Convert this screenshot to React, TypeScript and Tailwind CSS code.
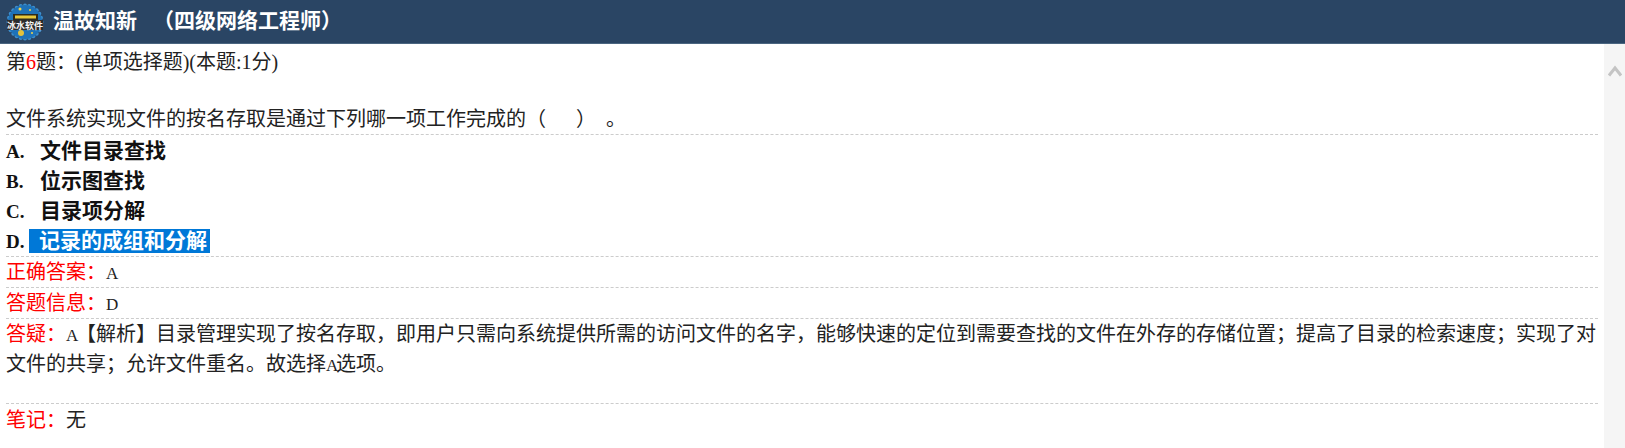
const options = [
  { key: 'A', text: '文件目录查找' },
  { key: 'B', text: '位示图查找' },
  { key: 'C', text: '目录项分解' },
];

function Half({ children }: { children: string }) {
  return <span className="inline-block w-[10px] text-[17px] leading-none">{children}</span>;
}

function Logo() {
  const dots = Array.from({ length: 24 }, (_, i) => (i * Math.PI * 2) / 24);
  return (
    <svg width="38" height="38" viewBox="0 0 38 38" className="shrink-0">
      {dots.map((a) => (
        <circle key={a} cx={19 + 16.5 * Math.cos(a)} cy={19 + 16.5 * Math.sin(a)} r="2" fill="#3d8fce" />
      ))}
      <circle cx="19" cy="19" r="17" fill="#1f72b8" />
      <circle cx="14" cy="6" r="1.5" fill="#f2d54a" />
      <circle cx="24" cy="7" r="1" fill="#f2d54a" />
      <circle cx="15" cy="30" r="3" fill="#e3c23c" />
      <circle cx="26" cy="30" r="1" fill="#f2d54a" />
      <rect x="7" y="11" width="25" height="6" fill="#2e2a1c" />
      <rect x="9" y="12.5" width="21" height="3" fill="#e8c83a" />
      <rect x="1" y="17" width="36" height="10" fill="#2c2c2c" />
      <text x="19" y="25.5" textAnchor="middle" fontSize="9" fontWeight="700" fill="#f4f4f4" fontFamily="Noto Sans CJK SC, sans-serif">
        冰水软件
      </text>
    </svg>
  );
}

export default function App() {
  return (
    <div className="h-[448px] w-[1625px] overflow-hidden bg-white text-[20px] text-[#222] font-['Liberation_Serif','Noto_Sans_CJK_SC',serif]">
      <header className="flex h-[44px] items-center border-b border-[#4a6580] bg-[#2a4564] pl-[6px] text-white">
        <Logo />
        <span className="ml-[9px] text-[21px] font-bold whitespace-pre">
          温故知新<span className="ml-[16px]">（四级网络工程师）</span>
        </span>
      </header>
      <div className="flex h-[404px]">
        <main className="min-w-0 flex-1 px-[6px]">
          <section className="border-b border-dashed border-[#ccc] pt-[4px] leading-[28.67px]">
            <p>
              第<span className="text-[#f00]">6</span>题：(单项选择题)(本题:1分)
            </p>
            <p>&nbsp;</p>
            <p>文件系统实现文件的按名存取是通过下列哪一项工作完成的（&nbsp;&nbsp;&nbsp;&nbsp;&nbsp;&nbsp;）&nbsp;&nbsp;。</p>
          </section>
          <section className="border-b border-dashed border-[#ccc] pt-[1px] text-[21px] font-bold leading-[30px] text-[#111]">
            {options.map((o) => (
              <p key={o.key} className="whitespace-pre">
                <span className="inline-block w-[34px] text-[19px] leading-none">{o.key}.</span>
                {o.text}
              </p>
            ))}
            <p className="whitespace-pre">
              <span className="inline-block w-[23px] text-[19px] leading-none">D.</span>
              <span className="bg-[#0078d7] pr-[3px] pl-[10px] text-white">记录的成组和分解</span>
            </p>
          </section>
          <section className="border-b border-dashed border-[#ccc] leading-[30px]">
            <span className="text-[#f00]">正确答案：</span>
            <Half>A</Half>
          </section>
          <section className="border-b border-dashed border-[#ccc] leading-[30px]">
            <span className="text-[#f00]">答题信息：</span>
            <Half>D</Half>
          </section>
          <section className="border-b border-dashed border-[#ccc] pb-[24px] leading-[30px]">
            <span className="text-[#f00]">答疑：</span>
            <Half>A</Half>【解析】目录管理实现了按名存取，即用户只需向系统提供所需的访问文件的名字，能够快速的定位到需要查找的文件在外存的存储位置；提高了目录的检索速度；实现了对文件的共享；允许文件重名。故选择<Half>A</Half>选项。
          </section>
          <section className="pt-[1px] leading-[30px]">
            <span className="text-[#f00]">笔记：</span>无
          </section>
        </main>
        <aside className="flex w-[21px] shrink-0 justify-center bg-[#f5f5f5] pt-[21px]">
          <svg width="14" height="12" viewBox="0 0 14 12">
            <path d="M1 10.5 L7 3 L13 10.5" fill="none" stroke="#c4c4c4" strokeWidth="3" />
          </svg>
        </aside>
      </div>
    </div>
  );
}
